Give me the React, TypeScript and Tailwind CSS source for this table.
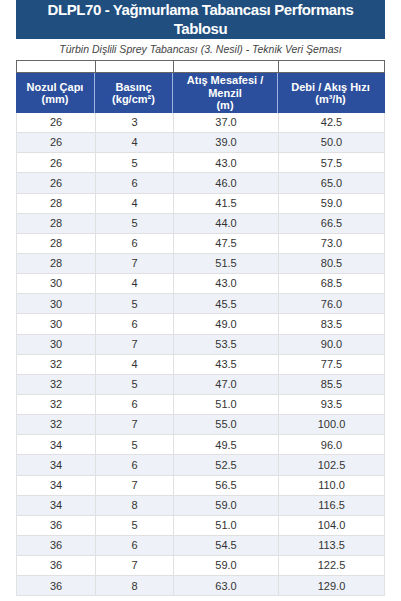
import React from "react";

// nozzle, pressure, range, flow
const rows: [number, number, string, string][] = [
  [26, 3, "37.0", "42.5"],
  [26, 4, "39.0", "50.0"],
  [26, 5, "43.0", "57.5"],
  [26, 6, "46.0", "65.0"],
  [28, 4, "41.5", "59.0"],
  [28, 5, "44.0", "66.5"],
  [28, 6, "47.5", "73.0"],
  [28, 7, "51.5", "80.5"],
  [30, 4, "43.0", "68.5"],
  [30, 5, "45.5", "76.0"],
  [30, 6, "49.0", "83.5"],
  [30, 7, "53.5", "90.0"],
  [32, 4, "43.5", "77.5"],
  [32, 5, "47.0", "85.5"],
  [32, 6, "51.0", "93.5"],
  [32, 7, "55.0", "100.0"],
  [34, 5, "49.5", "96.0"],
  [34, 6, "52.5", "102.5"],
  [34, 7, "56.5", "110.0"],
  [34, 8, "59.0", "116.5"],
  [36, 5, "51.0", "104.0"],
  [36, 6, "54.5", "113.5"],
  [36, 7, "59.0", "122.5"],
  [36, 8, "63.0", "129.0"],
];

const cols = "grid grid-cols-[79px_78px_105px_105px]";

export default function App() {
  return (
    <div
      className="w-[401px] h-[601px] overflow-hidden bg-white px-4"
      style={{ fontFamily: '"Liberation Sans", Arial, sans-serif' }}
    >
      <div className="bg-[#1f4e7f] text-white font-bold text-[15px] tracking-[-0.4px] leading-[19px] text-center pb-[1px] h-[39px]">
        DLPL70 - Yağmurlama Tabancası Performans
        <br />
        Tablosu
      </div>
      <div className="text-center italic text-[10.5px] text-[#444] mt-[3px] leading-[14px]">
        Türbin Dişlili Sprey Tabancası (3. Nesil) - Teknik Veri Şeması
      </div>

      {/* empty spacer row above header */}
      <div className={`${cols} mt-[4px] h-[13px] border border-[#666]`}>
        <div className="border-r border-[#666]" />
        <div className="border-r border-[#666]" />
        <div className="border-r border-[#666]" />
        <div />
      </div>

      <div className={`${cols} h-[40px] bg-[#2c4f9d] text-white font-bold text-[11px] leading-[12.5px] text-center`}>
        <div className="flex items-center justify-center border-r border-[#9fb3df]">
          Nozul Çapı
          <br />
          (mm)
        </div>
        <div className="flex items-center justify-center border-r border-[#9fb3df]">
          Basınç
          <br />
          (kg/cm²)
        </div>
        <div className="flex items-center justify-center border-r border-[#9fb3df]">
          Atış Mesafesi /
          <br />
          Menzil
          <br />
          (m)
        </div>
        <div className="flex items-center justify-center">
          Debi / Akış Hızı
          <br />
          (m³/h)
        </div>
      </div>

      <div className="border-l border-r border-[#e2e2e2]">
        {rows.map((r, i) => (
          <div
            key={i}
            className={`${cols} h-[20.15px] border-b border-[#e0e0e0] text-[11px] text-[#333] text-center ${
              i % 2 === 1 ? "bg-[#eef2f8]" : "bg-white"
            }`}
          >
            <div className="flex items-center justify-center border-r border-[#e0e0e0]">{r[0]}</div>
            <div className="flex items-center justify-center border-r border-[#e0e0e0]">{r[1]}</div>
            <div className="flex items-center justify-center border-r border-[#e0e0e0]">{r[2]}</div>
            <div className="flex items-center justify-center">{r[3]}</div>
          </div>
        ))}
      </div>
    </div>
  );
}
